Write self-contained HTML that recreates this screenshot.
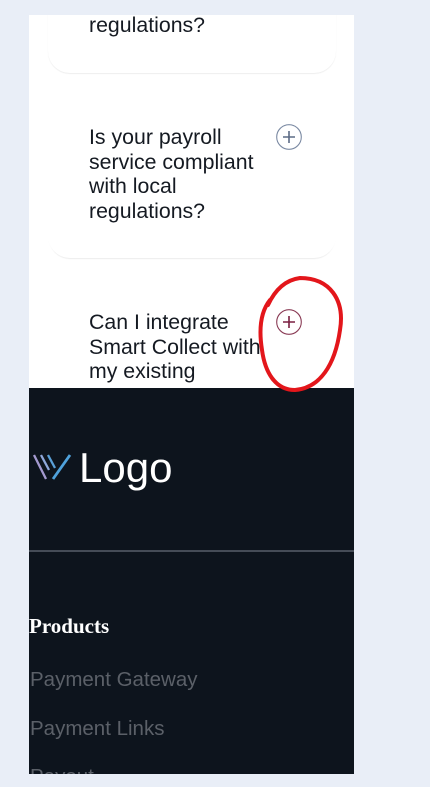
<!DOCTYPE html>
<html><head><style>
body{margin:0;width:430px;height:787px;background:#e9eef7;position:relative;overflow:hidden;font-family:"Liberation Sans",Arial,sans-serif}
.frame{position:absolute;left:29px;top:15px;width:325px;height:759px;background:#fff;overflow:hidden}
.card{position:absolute;left:19px;width:288px;background:#fff;border-radius:22px;box-shadow:0 1px 1px rgba(0,0,0,0.07)}
.q{position:absolute;left:60px;font-size:21.3px;line-height:24.7px;color:#151a22;font-family:"Liberation Sans",Arial,sans-serif;white-space:nowrap}
.pl{position:absolute;width:26px;height:26px}
.foot{position:absolute;left:0;top:373px;width:325px;height:400px;background:#0d141d}
.g{position:absolute;left:1px;color:#5b6068;font-family:"Liberation Sans",sans-serif;font-size:20.5px}
</style></head><body>
<div class="frame">
 <div class="card" style="top:-40px;height:98px"></div>
 <div class="q" style="top:-2px">regulations?</div>
 <div class="card" style="top:90px;height:153px;box-shadow:0 2px 1px -1px rgba(0,0,0,0.08)"></div>
 <div class="q" style="top:110px">Is your payroll<br>service compliant<br>with local<br>regulations?</div>
 <svg class="pl" style="left:247px;top:109px" viewBox="0 0 26 26"><circle cx="13" cy="13" r="12.3" fill="none" stroke="#7b8aa3" stroke-width="1.1"/><path d="M13 7v12M7 13h12" stroke="#5c6b85" stroke-width="1.6"/></svg>
 <div class="q" style="top:295px">Can I integrate<br>Smart Collect with<br>my existing</div>
 <svg class="pl" style="left:247px;top:294px" viewBox="0 0 26 26"><circle cx="13" cy="13" r="12.3" fill="none" stroke="#8a3b55" stroke-width="1.1"/><path d="M13 7v12M7 13h12" stroke="#7a1f40" stroke-width="1.6"/></svg>
 <div class="foot">
  <svg style="position:absolute;left:3px;top:64px" width="42" height="30" viewBox="0 0 42 30">
   <path d="M2 3l12 24" stroke="#a49ad0" stroke-width="2.3"/>
   <path d="M9 3l8 15" stroke="#8fa8da" stroke-width="2.3"/>
   <path d="M16 3l7 13" stroke="#5aa0d8" stroke-width="2.3"/>
   <path d="M21 27L38 3" stroke="#4fa2dc" stroke-width="2.8"/>
  </svg>
  <div style="position:absolute;left:50px;top:56px;font-size:42px;color:#fff;font-family:'Liberation Sans',sans-serif">Logo</div>
  <div style="position:absolute;left:0;top:162px;width:325px;height:2px;background:#454c57"></div>
  <div style="position:absolute;left:0;top:226px;font-family:'Liberation Serif',serif;font-size:21px;font-weight:bold;color:#fff">Products</div>
  <div class="g" style="top:280px">Payment Gateway</div>
  <div class="g" style="top:329px">Payment Links</div>
  <div class="g" style="top:377px">Payout</div>
 </div>
</div>
<svg style="position:absolute;left:0;top:0" width="430" height="787"><path d="M268 305C275 290 285 280 300 278C330 278 345 300 340 330C335 365 320 388 295 390C275 390 265 372 262 350C258 325 262 310 270 300" fill="none" stroke="#e3161b" stroke-width="4" stroke-linecap="round"/></svg>
</body></html>
